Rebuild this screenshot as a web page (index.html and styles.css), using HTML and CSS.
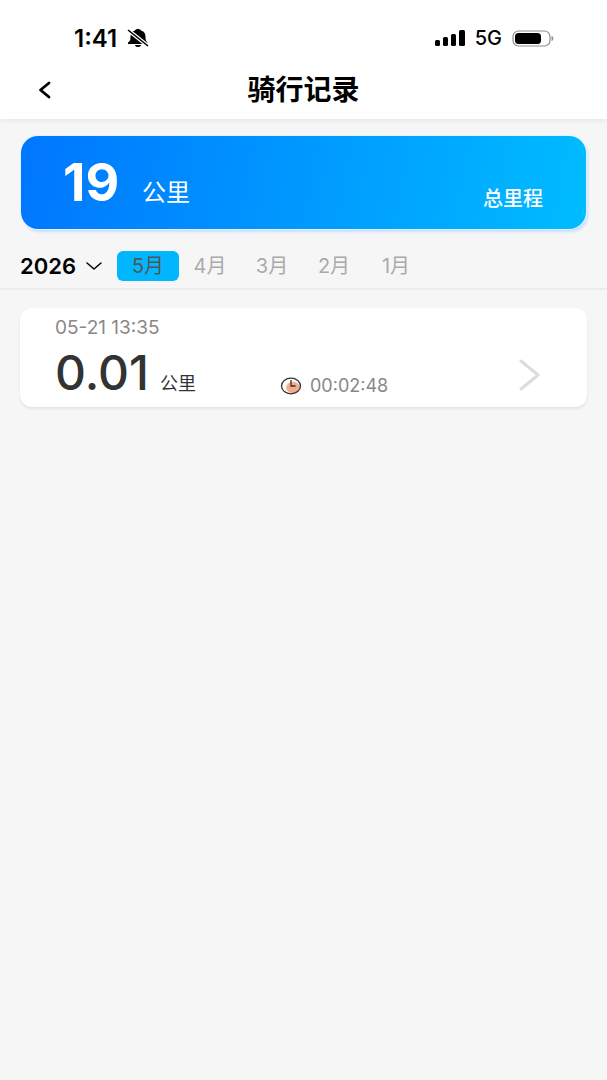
FILE: index.html
```
<!DOCTYPE html>
<html lang="zh-CN">
<head>
    <meta charset="UTF-8">
    <meta name="viewport" content="width=device-width, initial-scale=1.0">
    <title>骑行记录</title>
    <link rel="stylesheet" href="styles.css">
</head>
<body>
    <header class="header">
        <div class="status-bar">
            <span class="time">1:41</span>
            <svg class="bell" width="22" height="20" viewBox="0 0 22 20" aria-hidden="true">
                <path d="M11 1c1.600 0 2.500.6 3 1.400C17.600 3.500 18.500 6 18.500 9c0 3 .5 4 2 5.500V16H1v-1.500C3 13 3.500 12 3.500 9c0-3 .9-5.500 4.500-6.600C8.500 1.600 9.400 1 11 1zM8 17h6c-.3 1.400-1.500 2-3 2s-2.700-.6-3-2z"/>
                <path d="M1 2L21 18" stroke="#fff" stroke-width="3.800"/>
                <path d="M1 2L21 18" stroke="#000" stroke-width="1.600"/>
            </svg>
            <svg class="signal" width="30" height="16" viewBox="0 0 30 16" aria-hidden="true">
                <rect x="0" y="10" width="5" height="6" rx="1.500"/>
                <rect x="8" y="7" width="5" height="9" rx="1.500"/>
                <rect x="16" y="4" width="5" height="12" rx="1.500"/>
                <rect x="24" y="0" width="6" height="16" rx="1.500"/>
            </svg>
            <span class="network">5G</span>
            <svg class="battery" width="42" height="17" viewBox="0 0 42 17" aria-hidden="true">
                <rect x="1" y="1" width="37" height="15" rx="5.500" fill="#fff" stroke="#8e8e8e" stroke-width="1.200"/>
                <rect x="3" y="3" width="26" height="11" rx="3.500"/>
                <path d="M39.500 6c2.500.6 2.500 4.400 0 5z" fill="#8e8e8e"/>
            </svg>
        </div>
        <nav class="nav-bar">
            <button class="back" type="button" aria-label="返回">
                <svg width="14" height="18" viewBox="0 0 14 18" aria-hidden="true">
                    <path d="M11 2L2.500 9l8.500 7" fill="none" stroke="#000" stroke-width="2.800" stroke-linecap="round" stroke-linejoin="round"/>
                </svg>
            </button>
            <h1 class="title">骑行记录</h1>
        </nav>
    </header>

    <main>
        <section class="total">
            <div class="total-distance">
                <strong class="total-number">19</strong>
                <span class="total-unit">公里</span>
            </div>
            <span class="total-label">总里程</span>
        </section>

        <div class="filter">
            <div class="year">
                <select class="year-select" aria-label="年份">
                    <option>2026</option>
                </select>
                <svg class="year-arrow" width="16" height="8" viewBox="0 0 16 8" aria-hidden="true">
                    <path d="M1 1l7 6 7-6" fill="none" stroke="#000" stroke-width="1.500" stroke-linecap="round" stroke-linejoin="round"/>
                </svg>
            </div>
            <button class="month active" type="button">5月</button>
            <button class="month" type="button">4月</button>
            <button class="month" type="button">3月</button>
            <button class="month" type="button">2月</button>
            <button class="month" type="button">1月</button>
        </div>

        <a class="record" href="#">
            <div class="record-main">
                <time class="record-date">05-21 13:35</time>
                <div class="record-distance">
                    <span class="record-number">0.01</span>
                    <span class="record-unit">公里</span>
                </div>
            </div>
            <div class="duration">
                <svg width="22" height="18" viewBox="0 0 22 18" aria-hidden="true">
                    <ellipse cx="13" cy="10.500" rx="6.800" ry="5.800" fill="#f5ab8c"/>
                    <ellipse cx="11" cy="9" rx="9.500" ry="7.800" fill="none" stroke="#333" stroke-width="1.300"/>
                    <path d="M11 3v6h4.500" fill="none" stroke="#333" stroke-width="1.300"/>
                </svg>
                <span>00:02:48</span>
            </div>
            <svg class="arrow" width="22" height="32" viewBox="0 0 22 32" aria-hidden="true">
                <path d="M2 2l17 14L2 30" fill="none" stroke="#dcdcdc" stroke-width="3" stroke-linecap="round" stroke-linejoin="round"/>
            </svg>
        </a>
    </main>
</body>
</html>
```

FILE: styles.css
```
* {
    box-sizing: border-box;
}

body {
    margin: 0;
    min-height: 100vh;
    background-color: #f6f6f6;
    color: #000;
    font-family: Inter, "Noto Sans CJK SC", sans-serif;
}

button,
select {
    padding: 0;
    border: none;
    background: none;
    font-family: inherit;
    cursor: pointer;
}

.header {
    padding-top: 16px;
    background-color: #fff;
    box-shadow: 0 1px 6px rgba(0, 0, 0, 0.08);
}

.status-bar {
    display: flex;
    align-items: center;
    height: 44px;
    padding: 0 53px 0 74px;
}

.time {
    min-width: 48px;
    font-size: 24px;
    font-weight: 600;
}

.bell {
    margin-left: 5px;
}

.signal {
    margin-left: auto;
}

.network {
    margin: 0 10px;
    font-size: 20px;
    font-weight: 500;
}

.nav-bar {
    display: grid;
    grid-template-columns: 64px 1fr 64px;
    align-items: center;
    height: 59px;
}

.back {
    display: flex;
    align-items: center;
    height: 44px;
    padding-left: 38px;
}

.title {
    margin: 0;
    font-size: 28px;
    font-weight: 700;
    line-height: 32px;
    text-align: center;
}

.total {
    display: flex;
    align-items: center;
    justify-content: space-between;
    height: 93px;
    margin: 17px 21px 0;
    padding: 0 43px 0 42px;
    border-radius: 17px;
    background: linear-gradient(100deg, #0076ff, #00bcff);
    box-shadow: 0 0 0 1px #e0f4ff, 2px 3px 3px #c4deff;
    color: #fff;
}

.total-distance {
    display: flex;
    align-items: baseline;
    gap: 14px;
}

.total-number {
    min-width: 65px;
    font-size: 52px;
    font-weight: 700;
    line-height: 93px;
}

.total-unit {
    font-size: 24px;
}

.total-label {
    padding-top: 32px;
    font-size: 20px;
    font-weight: 500;
    line-height: 30px;
}

.filter {
    display: flex;
    align-items: center;
    height: 47px;
    margin-top: 14px;
    padding: 0 20px;
    border-bottom: 2px solid #ececec;
}

.year {
    position: relative;
    width: 97px;
}

.year-select {
    width: 84px;
    height: 30px;
    appearance: none;
    color: #000;
    font-size: 22px;
    font-weight: 600;
}

.year-arrow {
    position: absolute;
    top: 11px;
    left: 66px;
    pointer-events: none;
}

.month {
    width: 62px;
    height: 30px;
    border-radius: 6px;
    color: #aaa;
    font-size: 20px;
    line-height: 30px;
}

.month.active {
    background-color: #00b7ff;
    color: #555;
}

.record {
    display: grid;
    grid-template-columns: 225px 1fr auto;
    height: 99px;
    margin: 18px 20px 0;
    padding: 8px 46px 0 35px;
    border-radius: 12px;
    background-color: #fff;
    box-shadow: 0 2px 3px rgba(0, 0, 0, 0.08);
    color: #333;
    text-decoration: none;
}

.record-date {
    display: block;
    color: #888;
    font-size: 19px;
    line-height: 24px;
}

.record-distance {
    display: flex;
    align-items: baseline;
    gap: 8px;
    line-height: 66px;
}

.record-number {
    min-width: 97px;
    font-size: 48px;
    font-weight: 500;
}

.record-unit {
    font-size: 18px;
}

.duration {
    display: flex;
    align-items: center;
    align-self: start;
    gap: 8px;
    margin-top: 58px;
    color: #888;
    font-size: 18px;
    line-height: 24px;
}

.arrow {
    margin-top: 43px;
}
```
